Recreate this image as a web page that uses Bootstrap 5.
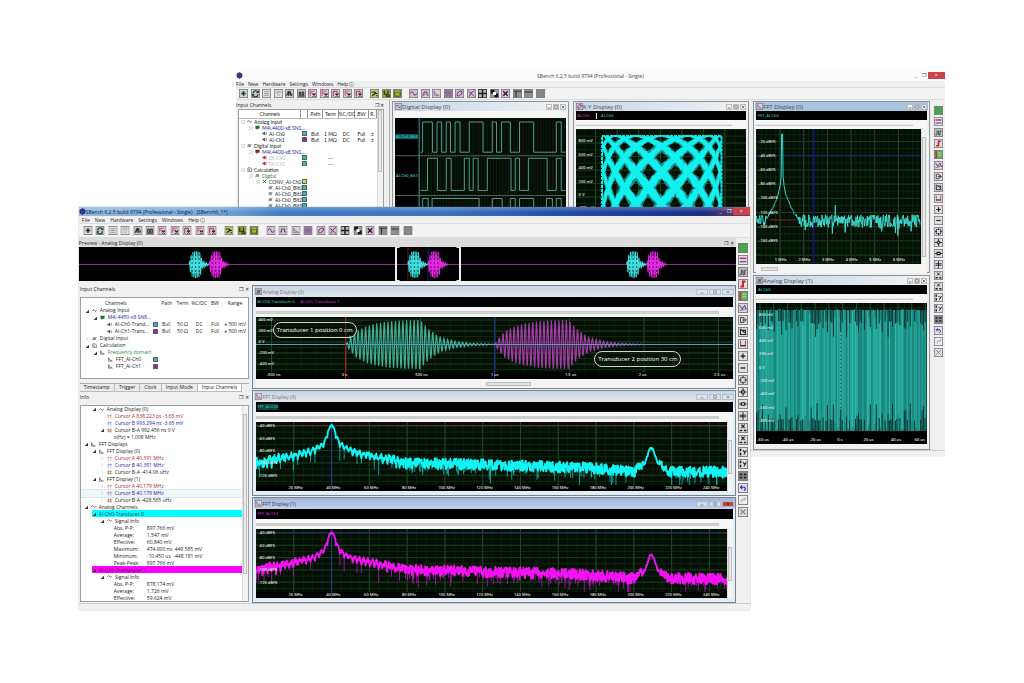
<!DOCTYPE html>
<html lang="en">
<head>
<meta charset="utf-8">
<meta name="viewport" content="width=device-width, initial-scale=1">
<title>SBench 6.2.5</title>
<link href="https://cdn.jsdelivr.net/npm/bootstrap@5.3.0/dist/css/bootstrap.min.css" rel="stylesheet">
<style>
body{font:5px/6px "Open Sans","Noto Sans",sans-serif;color:#222;background:#fff}
a{color:inherit;text-decoration:none}
button{font:inherit;color:inherit;padding:0;border:0;background:none;line-height:1}
svg{display:block}
.desktop{min-height:100vh;overflow:hidden}
.app{position:absolute;background:#f0f0f0}
.app-back{left:23.05%;top:70px;width:69.2%;height:387px}
.app-front{left:7.7%;top:207px;width:65.5%;box-shadow:0 0 1px #777}
.bar-back{height:11px;background:#fcfcfc;color:#444}
.bar-back .caption-mid{padding-left:26px}
.bar-front{height:9px;color:#102030;background:linear-gradient(180deg,#ffffff40,#0000 60%),linear-gradient(90deg,#8fb9e2 0,#79a9db 20%,#3f7ec4 30%,#3a72bb 55%,#2048a4 75%,#1a2f86 93%,#7c3a5a)}
.close-x{width:17px;height:7px;background:#c9454b;color:#fff}
.wbtn{width:8px;height:7px}
.menus{height:6px;gap:4px}
.app-front .menus{height:7px;gap:5px;padding-left:3px}
.menus u{text-decoration-thickness:1px}
.tools{height:13px;padding-left:3px;border-top:1px solid #ddd;border-bottom:1px solid #ddd;background:#f3f3f3}
.app-front .tools{height:15px;padding-left:4px}
.strip{width:43.4%}
.app-front .strip{width:49.5%}
.tb{width:9px;height:9px;flex:none}
.app-front .tb{width:10px}
.tb svg{width:100%;height:100%}
.sep{width:2px;flex:none}
.rail{flex:0 0 13px;gap:2px;padding-top:6px}
.app-front .rail{flex-basis:14px;padding-top:5px}
.app-front .rail .tb{height:10px}
.dock-b{flex:0 0 21.6%;padding:0 5px 0 0}
.dock-b .pane{margin-left:2px}
.dock-f{flex:0 0 26.3%;padding:3px 3px 0 1px}
.cap{height:9px}
.pane{background:#fff;border:1px solid #9a9fa6;overflow:hidden}
.tree{table-layout:fixed;width:100%;border-collapse:collapse}
.tree th,.tree td{padding:0;font-weight:400;text-align:center;white-space:nowrap;height:6px;line-height:6px}
.tree td:first-child{text-align:left}
.tree-f td{height:7px;line-height:7px}.tree-f th{height:9px}
.tree-b{font-family:Lato,"Open Sans",sans-serif}
.tree-b th{height:8px;border-right:1px solid #999;border-bottom:1px solid #bbb}
.node{display:flex;align-items:center;height:6px;white-space:nowrap}
.node svg{width:5px;height:5px;flex:none;margin-right:3px}
.node .ex{width:4px;height:4px;margin-right:3px}
.tree-b .node svg{margin-right:2px}
.chip{width:5px;height:5px;border:1px solid #566;display:block;margin:auto}
.blue{color:#2222a8}.green{color:#2c8a3c}.red{color:#b02030}.dim{color:#bbb}
.docktabs{height:9px;border-top:1px solid #aaa}
.docktabs button{padding:0 4px;border-right:1px solid #bbb;border-bottom:1px solid #bbb;background:#ececec;white-space:nowrap}
.docktabs .active{background:#fff}
.info{height:195px;display:grid;grid-auto-rows:1fr}
.info .node{height:auto}
.info .key{width:33px}
.hl-c{background:#0ff content-box;color:#004858}.hl-m{background:#f0f content-box;color:#500050}
.hl-s{background:#eef6f8;box-shadow:0 0 0 1px #dbe9ee}
.vscroll{width:6px;background:#f2f2f2;border-left:1px solid #ddd;flex:none}
.thumb-v{width:4px;border:1px solid #bbb;background:#eaeaea}
.mdi-b{display:grid;grid-template-columns:repeat(3,1fr);grid-template-rows:172px 175px;gap:2px 4px;padding:1px 2px 0;background:#eee;border-left:1px solid #aaa}
.mdi-f{padding:4px 0 0;gap:1px}
.sub{border:1px solid #8a949c;background:#f0f0f0;padding:0 2px;min-width:0}
.app-front .sub{border-color:#6f8593;background:#e6edf2;padding:0 2px 0 3px}
.sub-title{height:9px;background:linear-gradient(90deg,#c6d6e6,#dfe7ef 60%,#f2f2f2);margin:0 -1px;color:#444}
.sub-title svg{width:7px;height:7px;margin:0 1px}
.app-back .sub-title{font-size:6px}
.app-back .sub-title>svg{margin-right:0}
.app-back .act{background:#a9c4e0}
.app-front .sub-title{height:11px;margin:0 -2px;background:linear-gradient(#cbd5df,#dfe6ed);color:#777}
.app-front .act{background:linear-gradient(#9fb5dc,#c3d3ea);color:#334}
.mini{width:6px;height:6px;border:1px solid #bbb;background:#f4f4f4;margin-right:1px}
.app-front .mini{width:12px;height:6px;border-color:#a9b6c3;background:#dde5ee;opacity:.7}
.app-front .mini-red{background:#cc4438;color:#fff;opacity:1}
.mini svg{width:4px;height:4px;margin:auto}
.legend-strip{height:9px;background:#000;color:#2fb8a8;font-size:4px;font-weight:600;padding-left:2px;gap:6px}
.app-front .legend-strip{height:10px}
.track{height:9px;background:#f6f6f6;padding-right:14px}
.track-short{height:7px}
.app-front .track{height:10px}
.track div{height:2px;width:100%;border-bottom:1px solid #ccc;background:#e8e8e8}
.app-front .track div{height:3px;border:1px solid #c8c8c8;background:#d8d8d8}
.plot{position:relative;background:#000;overflow:hidden;min-width:0;flex:1}
.plot>svg{width:100%;height:100%}
.plot path{vector-effect:non-scaling-stroke}
.lab{position:absolute;font-size:4px;line-height:4px;font-weight:600;color:#dfe6df;white-space:nowrap;transform:translateY(-50%)}
.lab-x{transform:translate(-50%,-50%)}
.note{position:absolute;font-size:6px;line-height:14px;border:1px solid #cfd6cf;border-radius:9px;padding:0 3px;color:#fff;background:#0a140a80;white-space:nowrap}
.hs{height:9px;background:#f4f4f4}
.hs div{border:1px solid #bbb;background:#e3e3e3;height:4px}
.status{height:7px;border-top:1px solid #ccc;background:#f1f1f1}
.pr-cap{height:9px;background:#dcdcdc;padding-right:2px}
.frame-sel{position:absolute;left:48.1%;width:10.1%;top:0;bottom:0;border:solid #eee;border-width:1px 2px;border-image:linear-gradient(90deg,#eee 5%,#0000 6% 94%,#eee 95%) 1}
</style>
</head>
<body>
<svg width="0" height="0" class="position-absolute" aria-hidden="true"><defs id="defs"></defs></svg>
<main class="desktop position-relative">

<section class="app app-back d-flex flex-column">
  <header class="bar-back d-flex align-items-center">
    <svg width="7" height="7" viewBox="0 0 7 7"><use href="#i-logo"/></svg>
    <span class="flex-fill text-center caption-mid">SBench 6.2.5 build 9794 (Professional - Single)</span>
    <button class="wbtn" aria-label="Minimise">_</button><button class="wbtn" aria-label="Restore">❐</button><button class="close-x" aria-label="Close">×</button>
  </header>
  <nav class="menus d-flex align-items-center"></nav>
  <div class="tools d-flex align-items-center"><div class="strip d-flex justify-content-between"></div></div>
  <div class="d-flex flex-fill">
    <aside class="dock-b d-flex flex-column">
      <div class="cap d-flex justify-content-between align-items-center"><span>Input Channels</span><span>❐ ✕</span></div>
      <div class="pane d-flex flex-fill">
        <table class="tree tree-b align-self-start"><colgroup><col style="width:45%"><col style="width:5%"><col style="width:11%"><col style="width:11%"><col style="width:12%"><col style="width:10%"><col style="width:6%"></colgroup>
          <thead><tr><th>Channels</th><th></th><th>Path</th><th>Term</th><th>%C/DC</th><th>BW</th><th>R.</th></tr></thead><tbody id="treeB"></tbody></table>
        <div class="vscroll"><div class="thumb-v" style="height:62px"></div></div>
      </div>
    </aside>
    <div class="mdi-b flex-fill">
      <article class="sub" style="grid-row:span 2" data-win="digital" data-title="Digital Display (0)"></article>
      <article class="sub" style="grid-row:span 2" data-win="xy" data-title="X-Y Display (0)"></article>
      <article class="sub" data-win="fftB" data-title="FFT Display (0)"></article>
      <article class="sub" data-win="analog1" data-title="Analog Display (1)"></article>
    </div>
    <div class="rail d-flex flex-column align-items-center"></div>
  </div>
  <footer class="status"></footer>
</section>

<section class="app app-front d-flex flex-column">
  <header class="bar-front d-flex align-items-center">
    <svg width="7" height="7" viewBox="0 0 7 7"><use href="#i-logo"/></svg>
    <span>SBench 6.2.5 build 9794 (Professional - Single)</span><span class="ms-1">[SBench6_1*]</span>
    <button class="wbtn ms-auto text-white" aria-label="Minimise">_</button><button class="wbtn text-white" aria-label="Restore">❐</button><button class="close-x" aria-label="Close">×</button>
  </header>
  <nav class="menus d-flex align-items-center"></nav>
  <div class="tools d-flex align-items-center"><div class="strip d-flex justify-content-between"></div></div>
  <div class="d-flex">
    <div class="flex-fill" style="min-width:0">
      <div class="pr-cap d-flex justify-content-between align-items-center"><span>Preview - Analog Display (0)</span><span>❐ ✕</span></div>
      <div class="plot" data-plot="preview" style="height:34px"></div>
      <div class="d-flex">
        <aside class="dock-f">
          <div class="cap d-flex justify-content-between align-items-center"><span>Input Channels</span><span>❐ ✕</span></div>
          <div class="pane mt-1">
            <table class="tree tree-f mb-0"><colgroup><col style="width:42%"><col style="width:5%"><col style="width:9%"><col style="width:10%"><col style="width:10%"><col style="width:9%"><col style="width:15%"></colgroup>
              <thead><tr><th>Channels</th><th></th><th>Path</th><th>Term</th><th>%C/DC</th><th>BW</th><th>Range</th></tr></thead><tbody id="treeF"></tbody></table>
            <div class="pb-2"></div>
          </div>
          <div class="docktabs d-flex mt-1"><button>Timestamp</button><button>Trigger</button><button>Clock</button><button>Input Mode</button><button class="active">Input Channels</button></div>
          <div class="cap d-flex justify-content-between align-items-center"><span>Info</span><span>❐ ✕</span></div>
          <div class="pane d-flex mt-1"><div class="info flex-fill" id="info"></div><div class="vscroll pt-2"><div class="thumb-v" style="height:160px"></div></div></div>
        </aside>
        <div class="mdi-f flex-fill d-flex flex-column" style="min-width:0">
          <article class="sub" data-win="analog0" data-title="Analog Display (0)"></article>
          <article class="sub" data-win="fft0" data-title="FFT Display (0)"></article>
          <article class="sub" data-win="fft1" data-title="FFT Display (1)"></article>
        </div>
      </div>
    </div>
    <div class="rail d-flex flex-column align-items-center"></div>
  </div>
  <footer class="status"></footer>
</section>
</main>

<script src="https://cdn.jsdelivr.net/npm/bootstrap@5.3.0/dist/js/bootstrap.bundle.min.js"></script>
<script>
const $$ = s => [...document.querySelectorAll(s)];
let seed = 7;
const rnd = () => (seed = (seed * 16807) % 2147483647) / 2147483647;

/* ---- icons: 12 x 12 grid ---- */
const p = (d, c, w = 1, f = 'none') => `<path d="${d}" stroke="${c}" stroke-width="${w}" fill="${f}"/>`;
const face = (f = '#c9c5c9') => `<rect x=".5" y=".5" width="11" height="11" fill="${f}" stroke="#77717b"/>`;
const bars = p('M3 9V4H5V9M7 9V4H9V9M2 9.5H10', '#222', 1.3);
const pink = p('M2 3H9M2 5.500H6M3 2V9', '#d0508c', 1.2) + p('M6 6L10 10M10 6L6 10', '#222', 1.5);
const icons = {
  add: face('#d0d4d0') + p('M6 3V9M3 6H9', '#243824', 2.2), ref: face('#d0d4d0') + p('M3 6A3 3 0 0 1 9 5M9 7A3 3 0 0 1 3 8', '#243', 1.8) + p('M7 5H10V2M5 7H2V10', '#243', 1.2),
  list: face('#ddd') + p('M3 3.500H9M3 6H9M3 8.500H9', '#888'), dash: face('#ddd') + p('M3 3H9M3 5H6M7 5H9M4 8H8', '#999'),
  bars: face() + bars, arm: face() + p('M2 9L5 4V9M7 3V9M9 6V9M3 4H8', '#222', 1.4), pk: face('#d9c9d2') + pink,
  pk2: face('#d9c9d2') + p('M3 10V3H8V6', '#a03050', 1.3) + p('M6 6L10 10M10 6L6 10', '#222', 1.5),
  load: face('#b9c56a') + p('M2 4H6L8 6H10', '#253a10', 1.6) + p('M3 9L8 5M8 9L10 9', '#222', 1.5), save: face('#8ea82a') + p('M3 2V7H8V2', '#232', 1.6) + p('M6 8H10V10H6Z', '#111', 1),
  cyl: face('#7c8848') + p('M2.500 4H9.500V9.500H2.500Z', '#3c4808', 1, '#a4b034') + p('M3 4A3 1.200 0 0 1 9 4', '#dce070'),
  sine: face() + p('M2 6Q4 1 6 6T10 6', '#8a2880', 1.3), sq: face() + p('M2 8V8H4V4H8V8H10', '#8a2880', 1.3), dec: face('#d9d4d9') + p('M3 2V9H10M3 3Q4 8 9 8', '#8a5a88', 1),
  fill: face('#a27aa8') + p('M2 4H10M2 6H10M2 8H10', '#8a5890'), ell: face() + '<ellipse cx="6" cy="6" rx="4" ry="2.300" transform="rotate(-45 6 6)" fill="none" stroke="#8a2880" stroke-width="1.300"/>',
  xc: face() + p('M2 3L10 10M10 2Q4 5 3 10', '#8a2880', 1.3), cross: '<rect width="12" height="12" fill="#222"/>' + '<path d="M1 1h4v4h-4zM7 1h4v4h-4zM1 7h4v4h-4zM7 7h4v4h-4z" fill="#b8b8b8"/>',
  chk: face('#999') + '<path d="M1 1h5v5h-5zM6 6h5v5h-5z" fill="#161616"/><path d="M4 4h4v4h-4z" fill="#fff"/>', x: face() + p('M3 3L9 9M9 3L3 9', '#4a1040', 2),
  lt: face('#8f8f8f') + p('M1 3H11M4 3V11', '#333', 1.5), lh: face('#8f8f8f') + p('M1 4H11', '#333', 1.5), solid: face('#858585'),
  grn: face('#46a046') + p('M1 4H11M1 8H11M4 1V11M8 1V11', '#56b456', .6), flag: face('#e8e0f0') + p('M2 4H10', '#c03060', 2) + p('M2 8H10', '#504a90', 1.5),
  wave: face('#bbb') + p('M2 9H4V4H6V9H8V4H10', '#333'), sred: face('#ddd') + p('M3 9H6V3H9', '#d01830', 2.2), gr: face('#5fae5a') + p('M3 1V11', '#d03030', 2) + p('M5 4H10M5 7H10', '#cde8c0'),
  cur: face('#d9d0e0') + p('M2 3L5 7L8 3L10 8', '#403a70', 1.2) + p('M2 9L9 7', '#a04070'), doc: face('#ddd') + p('M3 3H7V9H3ZM5 6H10M8 4L10 6L8 8', '#333'),
  ax: face('#ddd') + p('M3 2V9H10M5 4H9V8M4 3L8 7', '#222', 1.3), ih: face('#ddd') + p('M3 2V9M9 2V9', '#a33') + p('M3 8H9', '#222', 1.5),
  plus: face('#ddd') + p('M6 3V9M3 6H9', '#222', 1.5), minus: face('#ddd') + p('M3 6H9', '#222', 1.5),
  out: face('#ddd') + p('M6 1.500V4M6 8V10.500M1.500 6H4M8 6H10.500M3 3L4 4M9 3L8 4M3 9L4 8M9 9L8 8', '#222', 1.7), inn: face('#ddd') + p('M6 1.500V4M6 8V10.500M1.500 6H4M8 6H10.500M4.500 4.500H7.500V7.500H4.500Z', '#222', 1.3),
  hz: face('#ddd') + p('M1.500 6H4M8 6H10.500M4 4.500H8V7.500H4Z', '#222', 1.4), vt: face('#ddd') + p('M6 1.500V10.500M2 5H10M2 7H10', '#222', 1.2),
  xx: face('#ddd') + p('M4 2L8 6M8 2L4 6', '#222', 1.3) + p('M2 9H5M7 9H10', '#222', 2), yy: face('#ddd') + p('M3 2V5M3 7V10', '#222', 2) + p('M6 4L8 6M10 4L7 9', '#222', 1.3),
  quad: face('#888') + p('M2 4H5M7 4H10M2 8H5M7 8H10', '#222', 2), undo: face('#dcdcea') + p('M3 5H8Q10 8 7 9M5 3L3 5L5 7', '#2a3aa0', 1.3), redo: face('#eee') + p('M9 5H5Q3 8 5 9M8 3L9 5L7 7', '#999'),
  gx: face('#ddd') + p('M3 3L9 9M9 3L3 9', '#888', 1.3),
  logo: '<path d="M3.500 .5L6 2V5L3.500 6.500L1 5V2Z" fill="#38389a" stroke="#181850" stroke-width=".6"/>',
  open: '<path d="M12 2V12H2Z" fill="#333"/>', shut: '<path d="M4 2L9 6L4 10" fill="none" stroke="#999"/>', box: '<path d="M1 1H11V11H1ZM3 6H9" fill="none" stroke="#999"/>',
  tw: p('M1 7Q3 1 6 6T11 5', '#333', 1.6), td: p('M1 9H3V4H6V9H8V4H11', '#333', 1.4), tc: p('M2 2H8L11 5V11H2ZM5 5V9M5 7H8', '#333', 1.3),
  card: '<path d="M1 2H11V9H1ZM3 9H6V11H3Z" fill="#187030"/>', card2: '<path d="M1 2H11V9H1ZM3 9H6V11H3Z" fill="#703020"/>',
  spk: '<path d="M1 4H4L7 1V11L4 8H1Z" fill="#445"/>' + p('M9 3V9M11 3V9', '#445'), spx: '<path d="M1 4H4L7 1V11L4 8H1Z" fill="#a33"/>' + p('M5 2L11 10M11 2L5 10', '#c22', 2),
  ft: p('M1 1V10H11M2 2L5 8H9', '#444', 1.5), curA: p('M3 1V11M9 1V11M1 4H11', '#c66', 1.2), curB: p('M3 1V11M9 1V11M1 4H11', '#66c', 1.2), curC: p('M3 1V11M9 1V11M1 4H11M1 8H11', '#844', 1.2),
  mi: p('M2 9H10', '#333', 2), ma: p('M2 2H10V10H2Z', '#333', 1.6), cl: p('M2 2L10 10M10 2L2 10', '#333', 1.8)
};
document.getElementById('defs').innerHTML = Object.entries(icons).map(([k, v]) => `<symbol id="i-${k}" viewBox="${k === 'logo' ? '0 0 7 7' : '0 0 12 12'}">${v}</symbol>`).join('');
const ic = (n, c = '') => `<svg class="${c}" viewBox="0 0 12 12">${n ? `<use href="#i-${n}"/>` : ''}</svg>`;
const tb = n => n === '|' ? '<span class="sep"></span>' : `<button class="tb" aria-label="${n}">${ic(n)}</button>`;

$$('.menus').forEach(m => m.innerHTML = ['File', 'New', 'Hardware', 'Settings', 'Windows', 'Help ⓘ'].map(t => `<a href="#"><u>${t[0]}</u>${t.slice(1)}</a>`).join(''));
const bar = 'add ref list dash arm bars pk pk pk2 pk pk2 | load save cyl | sine sq dec fill ell xc cross chk x lt lh solid'.split(' ');
$$('.strip').forEach(t => t.innerHTML = bar.map(tb).join(''));
const rail = 'grn flag wave sred gr cur doc ax ih plus minus out inn hz vt xx xx yy yy quad undo redo gx'.split(' ');
$$('.rail').forEach(t => t.innerHTML = rail.map(tb).join(''));

/* ---- trees ---- */
const node = (d, ex, icon, text, cls = '') => `<div class="node ${cls}" style="padding-left:${d}px">${ic(ex, 'ex')}${icon ? ic(icon) : ''}${text}</div>`;
const row = (d, ex, icon, text, cls, chip, cells = ['', '', '', '', '']) => `<tr><td>${node(d, ex, icon, text, cls)}</td><td>${chip ? `<span class="chip" style="background:${chip}"></span>` : ''}</td>${cells.map(c => `<td>${c}</td>`).join('')}</tr>`;
const T = '#38b8b8', M = '#a020a8';
treeF.innerHTML = [
  [4, 'open', 'tw', 'Analog Input'], [12, 'open', 'card', 'M4i.4450-x8 SN8...', 'blue'],
  [19, '', 'spk', 'AI-Ch0-Trand...', '', T, ['Buf.', '50 Ω', 'DC', 'Full', '± 500 mV']], [19, '', 'spk', 'AI-Ch1-Trans...', '', M, ['Buf.', '50 Ω', 'DC', 'Full', '± 500 mV']],
  [4, 'shut', 'td', 'Digital Input'], [4, 'open', 'tc', 'Calculation'], [12, 'open', 'ft', 'Frequency domain', 'green'],
  [20, '', 'ft', 'FFT_AI-Ch0', '', T], [20, '', 'ft', 'FFT_AI-Ch1', '', M]].map(r => row(...r)).join('');
treeB.innerHTML = [
  [2, 'box', 'tw', 'Analog Input'], [10, 'box', 'card', 'M4i.4400-x8 SN1...', 'blue'],
  [17, '', 'spk', 'AI-Ch0', '', T, ['Buf.', '1 MΩ', 'DC', 'Full', '±']], [17, '', 'spk', 'AI-Ch1', '', M, ['Buf.', '1 MΩ', 'DC', 'Full', '±']],
  [2, 'box', 'td', 'Digital Input'], [10, 'box', 'card2', 'M4i.4400-x8 SN1...', 'blue'],
  [17, '', 'spx', 'DI-Ch0', 'dim', T, ['', '---', '', '', '']], [17, '', 'spx', 'DI-Ch1', 'dim', T, ['', '---', '', '', '']],
  [2, 'box', 'tc', 'Calculation'], [10, 'box', 'td', 'Digital', 'green'], [17, 'box', 'cl', 'CONV_AI-Ch0', '', '#d8d838'],
  [23, '', 'td', 'AI-Ch0_Bit0', '', T], [23, '', 'td', 'AI-Ch0_Bit1', '', T], [23, '', 'td', 'AI-Ch0_Bit2', '', T], [23, '', 'td', 'AI-Ch0_Bit3', '', T]].map(r => row(...r)).join('');
const kv = (k, v) => `<div class="node" style="padding-left:33px"><span class="key">${k}</span>${v}</div>`;
info.innerHTML = [
  node(11, 'open', 'tw', 'Analog Display (0)'), node(19, '', 'curA', 'Cursor A 838.223 ps -3.65 mV', 'red'), node(19, '', 'curB', 'Cursor B 993.294 ns -3.65 mV', 'blue'),
  node(19, 'open', 'curC', 'Cursor B-A 992.456 ns 0 V'), node(26, '', '', 'x(Hz) = 1.008 MHz'),
  node(3, 'open', 'ft', 'FFT Displays'), node(11, 'open', 'ft', 'FFT Display (0)'), node(19, 'shut', 'curA', 'Cursor A 40.391 MHz', 'red'), node(19, 'shut', 'curB', 'Cursor B 40.391 MHz', 'blue'), node(19, 'shut', 'curC', 'Cursor B-A -414.06 uHz'),
  node(11, 'open', 'ft', 'FFT Display (1)'), node(19, 'shut', 'curA', 'Cursor A 40.179 MHz', 'red'), node(19, 'shut', 'curB', 'Cursor B 40.179 MHz', 'blue hl-s'), node(19, 'shut', 'curC', 'Cursor B-A -428.565 uHz'),
  node(3, 'open', 'tw', 'Analog Channels'), node(11, 'open', '', 'AI-Ch0-Tranducer 0', 'hl-c'), node(19, 'open', 'tw', 'Signal Info'),
  kv('Abs. P-P:', '897.766 mV'), kv('Average:', '1.547 mV'), kv('Effective:', '60.840 mV'), kv('Maximum:', '474.000 ns&nbsp; 449.585 mV'), kv('Minimum:', '-10.450 us&nbsp; -448.181 mV'), kv('Peak-Peak:', '897.766 mV'),
  node(11, 'open', '', 'AI-Ch1-Transducer 1', 'hl-m'), node(19, 'open', 'tw', 'Signal Info'), kv('Abs. P-P:', '878.174 mV'), kv('Average:', '1.726 mV'), kv('Effective:', '59.624 mV')].join('');

/* ---- plots ---- */
const path = (pts, c, w = 1, extra = '') => `<path fill="none" d="M${pts.map(q => q[0].toFixed(2) + ' ' + q[1].toFixed(2)).join('L')}" stroke="${c}" stroke-width="${w}" ${extra}/>`;
const vl = (x, h, c, e = '') => path([[x, 0], [x, h]], c, 1, e), hl = (y, w, c, e = '') => path([[0, y], [w, y]], c, 1, e);
function grid(w, h, x0, dx, y0, dy, minor) {
  let s = `<rect width="${w}" height="${h}" fill="#040f05"/>`;
  for (let x = x0 % (dx / minor); x < w; x += dx / minor) s += vl(x, h, '#0c200e');
  for (let y = y0 % (dy / 2); y < h; y += dy / 2) s += hl(y, w, '#10280f');
  for (let x = x0; x < w; x += dx) s += vl(x, h, '#1e4a26');
  for (let y = y0; y < h; y += dy) s += hl(y, w, '#1a3a1c');
  return s;
}
const svg = (w, h, s) => `<svg viewBox="0 0 ${w} ${h}" preserveAspectRatio="none">${s}</svg>`;
const yl = (h, x, a) => a.map(([t, y]) => `<span class="lab" style="left:${x}px;top:${y / h * 100}%">${t}</span>`).join('');
const xl = (w, h, y, a) => a.map(([t, x]) => `<span class="lab lab-x" style="left:${x / w * 100}%;top:${y / h * 100}%">${t}</span>`).join('');
/* piecewise-linear lookup in a [x, y] table */
function lerp(tab, x) {
  if (x >= tab[tab.length - 1][0]) return tab[tab.length - 1][1];
  let i = 1; while (tab[i][0] <= x) i++;
  const [a, b] = [tab[i - 1], tab[i]];
  return a[1] + (b[1] - a[1]) * (x - a[0]) / (b[0] - a[0]);
}
function burst(x0, y0, period, env, c, w) {
  const pts = [];
  for (let x = 0; x < env[env.length - 1][0]; x += period / 8)
    pts.push([x0 + x, y0 - lerp(env, x) * Math.sin(x / period * 2 * Math.PI)]);
  return path(pts, c, w);
}
const ENV = [[0, 0], [4, 6], [10, 13], [20, 18], [30, 21], [42, 23], [55, 24], [74, 24.5], [82, 16], [90, 10], [98, 6], [110, 3], [125, 1.2], [150, .2]];
const BASE = [[0, 41], [150, 41], [226, 42.5], [326, 45.5], [370, 49], [470, 50]];
const SIDE = [[0, 3], [2, 5.500], [3.500, 10], [5.500, 15], [9, 21], [20, 27.500], [35, 31], [52, 34.500], [72, 39], [90, 60]];
const SECOND = [[0, 26], [1.500, 27], [3.300, 32], [6.600, 41.500], [15, 46.500], [20, 60]];
function fftTrace(c) {
  const pts = [], soft = [];
  for (let x = 0; x < 470; x += .4) {
    const d = Math.abs(x - 75.5), e = Math.abs(x - 394.5), base = lerp(BASE, x);
    const lobes = d > 4 && d < 72 ? 5 * (1 - Math.abs(Math.cos((d - 6) / 4.3 * Math.PI))) : 0;
    const s = Math.min(lerp(SIDE, d) + lobes, lerp(SECOND, e), base);
    const n = s > base - 1 ? 5.5 : Math.min(4, .6 + d * .05);
    const y = s + (rnd() - .5) * 2 * (e < 8 ? 1 : n);
    pts.push([x, y]);
    if (d > 7 && e > 8 && (s > base - 1 ? rnd() < .14 : lobes > 4.7 && rnd() < .7))
      soft.push(path([[x, y], [x, Math.min(63, s + 6 + rnd() * rnd() * 15)]], c, 1, 'opacity=".6"'));
  }
  return soft.join('') + path(pts, c, 1.9, 'stroke-linejoin="round"');
}
function fftFront(c, hc, vc) {
  return svg(470, 69, grid(470, 63, 37.7, 37.7, 4, 12.3, 4) + hl(3.5, 470, hc) + vl(75.5, 69, vc) + fftTrace(c))
    + yl(69, 3, [['-40 dBFS', 4], ['-60 dBFS', 16.500], ['-80 dBFS', 29], ['-100 dBFS', 41], ['-120 dBFS', 53.500]])
    + xl(470, 69, 65.500, Array.from({length: 12}, (_, i) => [`${(i + 1) * 20} MHz`, 40 + i * 37.700]));
}
function stepRow(edges, hi, lo) {
  const pts = [[26, lo]]; let lvl = lo;
  edges.forEach(z => { const x = (z - 24) / 3; pts.push([x, lvl]); lvl = lvl === lo ? hi : lo; pts.push([x, lvl]); });
  pts.push([173, lvl]); return path(pts, '#4f9a8c', 1);
}
/* woven bands of the X-Y figure, computed in phase space (u, v) and projected through sin() */
function weave(width, c) {
  const H = Math.PI / 2, dv = .561, slope = 1.25;
  const clamp = v => Math.max(-H, Math.min(H, v));
  let s = '';
  for (const dir of [1, -1]) for (let k = -7; k <= 7; k++) {
    const up = [], dn = [];
    for (let u = -H; u <= H + .001; u += .03) {
      const v = .113 + dir * slope * u + (k + .5) * dv;
      const x = 87.5 + 61 * Math.sin(u), j = (rnd() - .5) * .05;
      up.push([x, 65.5 - 59 * Math.sin(clamp(v + width * dv + j))]);
      dn.unshift([x, 65.5 - 59 * Math.sin(clamp(v - width * dv + j))]);
    }
    s += `<polygon points="${up.concat(dn).map(q => q.map(n => n.toFixed(1)).join()).join(' ')}" fill="${c}"/>`;
  }
  return s;
}
const blob = [[0, 0], [1, 7], [3, 12], [6, 13.500], [9, 13], [11, 12], [13, 4], [16, 2], [20, .2]];
const plots = {
  preview() {
    let s = '<rect width="656" height="34" fill="#000"/>' + hl(17.5, 656, '#7c3a78') + vl(328.5, 34, '#601018') + vl(348.500, 34, '#181870');
    [110, 328.500, 547].forEach(x => {
      s += burst(x, 17.5, 1.7, blob, '#3fe0e0', 1) + burst(x + 20, 17.5, 1.7, blob, '#e428e4', 1);
      for (const o of [3, 6.500, 10, 23, 26.500, 30]) s += path([[x + o, 7], [x + o, 28]], '#000', 1, 'stroke-dasharray="2 2" opacity=".6"');
    });
    return svg(656, 34, s) + '<div class="frame-sel"></div>';
  },
  analog0() {
    return svg(477, 62, grid(477, 55, 15.5, 74.5, 3, 11, 5) + vl(238.5, 62, '#1c2c9c') + burst(90, 27.500, 3.73, ENV, '#3fae94', 1.2) + burst(238.500, 27.500, 3.73, ENV, '#a03ca4', 1.2) + hl(27.500, 477, '#5a9cc0') + vl(89.5, 62, '#b01c1c') + '<circle cx="94" cy="20" r="1.500" fill="#4fe8e0"/>')
      + yl(62, 3, [['400 mV', 3], ['200 mV', 14], ['0 V', 25], ['-200 mV', 36], ['-400 mV', 47]])
      + xl(477, 62, 58, [['-500 ns', 18], ['0 s', 89], ['500 ns', 166], ['1 us', 239], ['1.5 us', 315], ['2 us', 387], ['2.5 us', 464]])
      + '<span class="note" style="left:3.600%;top:5px">Transducer 1 position 0 cm</span><span class="note" style="left:71%;top:34px">Transducer 2 position 30 cm</span>';
  },
  fft0: () => fftFront('#12f4f4', '#701c2c', '#1c3c98'),
  fft1: () => fftFront('#f412f4', '#1c2c68', '#1c3c98'),
  fftB() {
    const pts = [];
    for (let x = 0; x < 167; x += .5) {
      const d = Math.abs(x - 26.500); let y = 92 + (rnd() - .5) * 13 + (rnd() < .05 ? 9 : 0);
      if (d < 17) y = Math.min(y, d < .8 ? 5 : 40 + 50 * Math.pow(Math.max(0, d - .8) / 16, .45) + rnd() * 2);
      pts.push([x, y]);
    }
    return svg(167, 135, grid(167, 135, 24.5, 24, 12.5, 14.200, 5) + hl(26.5, 167, '#20208c', 'stroke-dasharray="3 1"') + path([[58.500, 0], [58.500, 135]], '#14146c', 2) + path([[15, 91], [40, 91]], '#801c1c') + path(pts, '#3fd8cc', 1) + path([[80, 92], [80.500, 76], [81, 92]], '#35c8bc'))
      + yl(135, 3, [-20, -40, -60, -80, -100, -120, -140, -160].map((v, i) => [v + ' dBFS', 12.500 + i * 14.200]))
      + xl(167, 135, 131, [1, 2, 3, 4, 5, 6].map(v => [v + ' MHz', 1 + v * 24]));
  },
  analog1() {
    let s = grid(173, 141, 4, 14, 11.5, 13.300, 2) + '<rect y="7" width="173" height="121" fill="#1c8c84"/>';
    for (let x = .5; x < 173; x += 1.5) {
      const t = 6 + rnd() * (Math.floor(x / 3) % 2 ? 3 : 16), b = 128 - rnd() * (Math.floor(x / 3) % 2 ? 3 : 18);
      s += path([[x, t], [x, b]], ['#2fc0b0', '#27aa9e', '#1c847c'][Math.floor(rnd() * 3)], 1);
      if (rnd() < .65) s += path([[x, 7], [x, t + 12]], '#0b3430') + path([[x, b - 10], [x, 128]], '#0b3430');
    }
    s += vl(86, 128, '#7a2020', 'stroke-dasharray="1 3"') + '<rect y="128" width="173" height="13" fill="#000"/>';
    return svg(173, 141, s) + yl(141, 3, [800, 600, 400, 200, 0, -200, -400, -600, -800].map((v, i) => [v ? v + ' mV' : '0 V', 11.500 + i * 13.300]))
      + xl(173, 141, 137, [['-60 us', 7], ['-40 us', 32], ['-20 us', 60], ['0 s', 85], ['20 us', 114], ['40 us', 142], ['60 us', 166]]);
  },
  xy() {
    return svg(174, 310, grid(174, 310, 20, 22, 14, 13.500, 2) + weave(.26, '#1a8f88') + weave(.18, '#12f0f0') + '<path d="M26.500 135V7H148.500V135" fill="none" stroke="#12e8e8" stroke-width="2" stroke-dasharray="3 1"/>')
      + yl(310, 3, [[ '800 mV', 12], ['600 mV', 25.500], ['400 mV', 39], ['200 mV', 52.500], ['0 V', 65.500], ['-200 mV', 79]]);
  },
  digital() {
    let s = '<rect width="173" height="320" fill="#000"/><rect x="25" width="148" height="320" fill="#030d05"/>';
    for (let x = 28; x < 173; x += 3) s += vl(x, 320, x % 5 ? '#0c1c0c' : '#2a0f12');
    s += hl(37.5, 173, '#506050') + hl(77, 173, '#506050') + vl(24.5, 320, '#3f9c94') + '<rect y="16" width="23" height="5" fill="#0c5c60"/>';
    s += stepRow([108, 138, 152, 166, 180, 193, 207, 222, 250, 292, 320, 333, 348, 375, 403, 446, 515, 530], 4, 34);
    s += stepRow([123, 153, 180, 195, 235, 250, 262, 277, 305, 377, 390, 403, 430, 487, 515, 530], 40, 72);
    s += stepRow([108, 125, 137, 280, 320, 350, 375, 390, 403, 446, 485, 503, 515, 530], 80, 112);
    return svg(173, 320, s) + yl(320, 1, [['AI-Ch0_Bit0', 18.500], ['AI-Ch0_Bit1', 57.500]]).replaceAll('style="', 'style="color:#38c0c0;');
  }
};
$$('[data-plot]').forEach(e => e.innerHTML = plots[e.dataset.plot]());

const legends = {
  xy: '<span style="color:#c030c0">AI-Ch1</span><span class="border-start ps-1">AI-Ch0</span>', fftB: 'FFT_AI-Ch0', analog1: 'AI-Ch0',
  analog0: '<span>AI-Ch0-Tranducer 0</span><span style="color:#b030b8">AI-Ch1-Transducer 1</span>',
  fft0: '<span style="background:#0c4440">FFT_AI-Ch0</span>', fft1: '<span style="color:#c030c0">FFT_AI-Ch1</span>'
};
const heights = { digital: 322, xy: 310, fftB: 135, analog1: 141, analog0: 62, fft0: 69, fft1: 69 };
$$('[data-win]').forEach(w => {
  const k = w.dataset.win, act = k === 'fftB' || k === 'fft1';
  const icon = { digital: 'sine', xy: 'ell', analog0: 'wave', analog1: 'wave' }[k] || 'dec';
  const mini = ['mi', 'ma', 'cl'].map(n => `<button class="mini ${n === 'cl' && k === 'fft1' ? 'mini-red' : ''}" aria-label="${n}">${ic(n)}</button>`).join('');
  const vs = /^fft/.test(k) ? `<div class="vscroll d-flex align-items-center"><div class="thumb-v" style="height:${k === 'fftB' ? 120 : 34}px"></div></div>` : '';
  w.innerHTML = `<div class="sub-title d-flex align-items-center ${act ? 'act' : ''}">${ic(icon)}<span class="me-auto">${w.dataset.title}</span>${mini}</div>`
    + (legends[k] ? `<div class="legend-strip d-flex align-items-center">${legends[k]}</div>` : '')
    + `<div class="track d-flex align-items-center ${k === 'digital' ? 'track-short' : ''}">${k === 'digital' ? '' : '<div></div>'}</div>`
    + `<div class="d-flex"><div class="plot" style="height:${heights[k]}px">${plots[k]()}</div>${vs}</div>`
    + (k === 'analog0' ? '<div class="hs d-flex justify-content-center align-items-center"><div style="width:9.500%;margin-left:6%"></div></div>' : '')
    + (k === 'fftB' ? '<div class="hs d-flex align-items-center"><div style="width:10%;margin-left:3%"></div></div>' : '')
    + (k === 'fft0' || k === 'fft1' ? '<div class="pb-1"></div>' : '');
});
</script>
</body>
</html>
